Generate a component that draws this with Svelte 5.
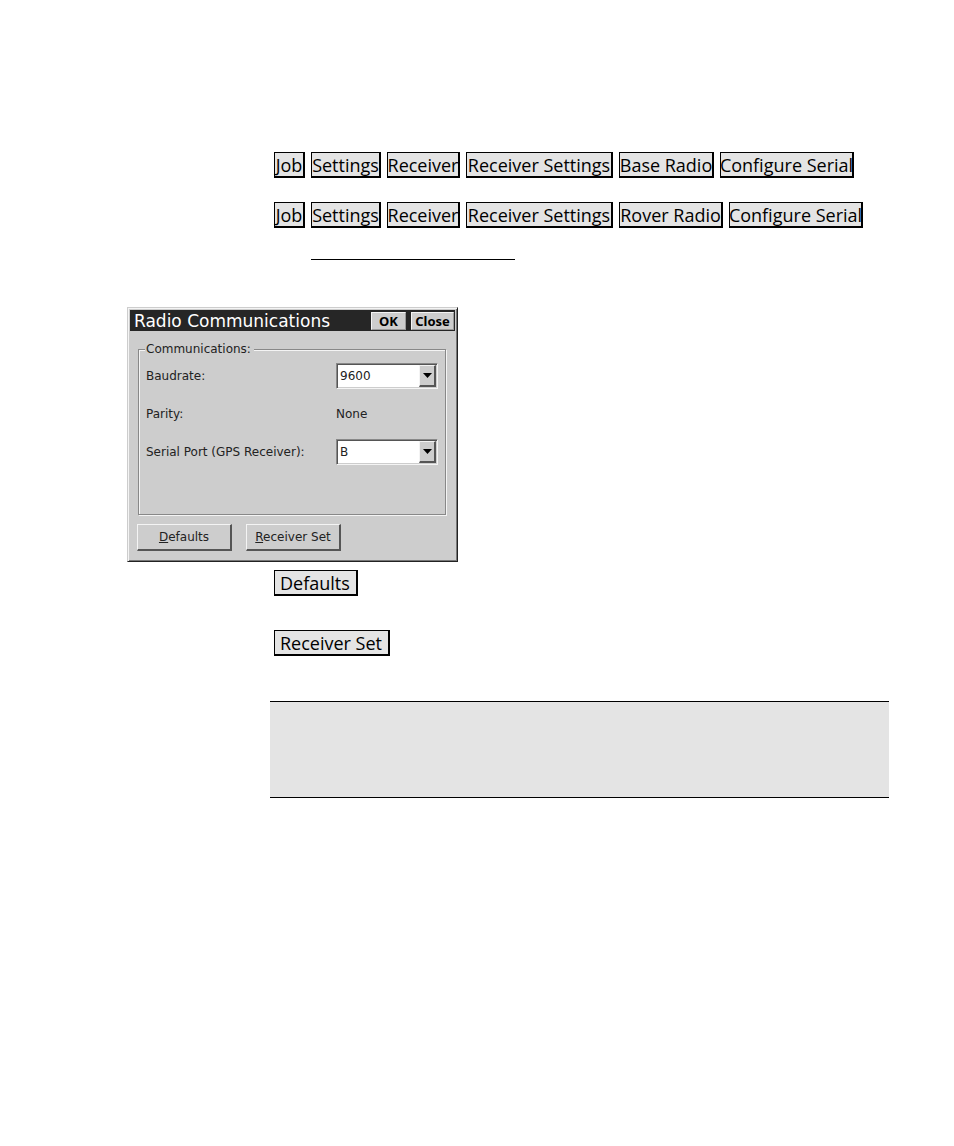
<script>
    const paths = [
        { id: 'base', steps: ['Job', 'Settings', 'Receiver', 'Receiver Settings', 'Base Radio', 'Configure Serial'] },
        { id: 'rover', steps: ['Job', 'Settings', 'Receiver', 'Receiver Settings', 'Rover Radio', 'Configure Serial'] }
    ];

    let baudrate = $state('9600');
    let port = $state('B');

    function reset() {
        baudrate = '9600';
        port = 'B';
    }
</script>

<main class="page">
    {#each paths as path (path.id)}
        <nav class="path {path.id}" aria-label={path.id}>
            {#each path.steps as step}
                <button class="key">{step}</button>
            {/each}
        </nav>
    {/each}

    <hr class="rule" />

    <form class="dialog" onsubmit={(e) => e.preventDefault()}>
        <header class="titlebar">
            <h1>Radio Communications</h1>
            <button class="title-btn ok">OK</button>
            <button class="title-btn close" type="button">Close</button>
        </header>

        <fieldset>
            <legend>Communications:</legend>
            <div class="row">
                <label for="baud">Baudrate:</label>
                <div class="combo">
                    <select id="baud" bind:value={baudrate}>
                        <option>4800</option>
                        <option>9600</option>
                        <option>19200</option>
                    </select>
                    <span class="arrow"><svg width="9" height="5" viewBox="0 0 9 5"><path d="M0 0h9L4.500 5z" /></svg></span>
                </div>
            </div>
            <div class="row">
                <span>Parity:</span>
                <span>None</span>
            </div>
            <div class="row">
                <label for="port">Serial Port (GPS Receiver):</label>
                <div class="combo">
                    <select id="port" bind:value={port}>
                        <option>A</option>
                        <option>B</option>
                        <option>C</option>
                        <option>D</option>
                    </select>
                    <span class="arrow"><svg width="9" height="5" viewBox="0 0 9 5"><path d="M0 0h9L4.500 5z" /></svg></span>
                </div>
            </div>
        </fieldset>

        <footer class="actions">
            <button type="button" onclick={reset}><u>D</u>efaults</button>
            <button type="button"><u>R</u>eceiver Set</button>
        </footer>
    </form>

    <div class="terms">
        <button class="key wide">Defaults</button>
        <button class="key wide">Receiver Set</button>
    </div>

    <aside class="note"></aside>
</main>

<style>
    :global(body) {
        margin: 0;
        background: #fff;
        color: #000;
        font-family: 'Open Sans', 'Noto Sans', sans-serif;
    }

    .page { padding: 152px 65px 40px 127px; }

    button { font-family: inherit; color: #000; border-radius: 0; cursor: pointer; white-space: nowrap; }

    .path {
        display: grid;
        gap: 6px;
        margin: 0 0 24px 147px;
    }
    .base { grid-template-columns: 31px 70px 73px 147px 95px 134px; }
    .rover { grid-template-columns: 31px 70px 73px 147px 104px 134px; }

    .key {
        display: flex;
        align-items: center;
        justify-content: center;
        box-sizing: border-box;
        height: 26px;
        padding: 0;
        border: solid #000;
        border-width: 1px 2px 2px 1px;
        background: #e4e4e4;
        font-size: 18px;
        line-height: 20px;
    }

    .rule {
        width: 204px;
        margin: 31px 0 47px 184px;
        border: 0;
        border-top: 1px solid #000;
    }

    .dialog {
        box-sizing: border-box;
        width: 331px;
        padding: 2px;
        border: 1px solid;
        border-color: #cdcdcd #222 #222 #cdcdcd;
        box-shadow: inset 1px 1px #f4f4f4, inset -1px -1px #777;
        background: #cdcdcd;
        color: #222;
        font-family: 'DejaVu Sans', sans-serif;
        font-size: 12px;
        line-height: 16px;
    }

    .titlebar {
        display: flex;
        align-items: center;
        gap: 5px;
        height: 21px;
        padding: 0 1px 0 4px;
        background: #262626;
    }

    h1 {
        flex: 1;
        margin: 0;
        color: #fff;
        font-size: 17px;
        font-weight: 400;
        line-height: 20px;
    }

    .title-btn {
        box-sizing: border-box;
        height: 18px;
        padding: 0;
        border: 1px solid;
        border-color: #f4f4f4 #999 #999 #f4f4f4;
        background: #cdcdcd;
        font-family: 'Noto Sans', sans-serif;
        font-size: 13px;
        font-weight: 700;
        line-height: 14px;
    }
    .ok { width: 35px; }
    .close { width: 43px; }

    fieldset {
        position: relative;
        height: 166px;
        box-sizing: border-box;
        margin: 18px 9px 9px 8px;
        padding: 12px 7px 0;
        border: 1px solid #888;
        box-shadow: 1px 1px #f4f4f4, inset 1px 1px #f4f4f4;
    }

    legend {
        position: absolute;
        top: -9px;
        left: 6px;
        padding: 0 3px 0 1px;
        background: #cdcdcd;
    }

    .row {
        display: grid;
        grid-template-columns: 190px 102px;
        align-items: center;
        height: 28px;
        margin-bottom: 10px;
    }

    .combo {
        display: flex;
        box-sizing: border-box;
        height: 26px;
        border: 1px solid;
        border-color: #888 #f4f4f4 #f4f4f4 #888;
        background: #fff;
        box-shadow: inset 1px 1px #555, inset -1px -1px #cdcdcd;
    }

    select {
        flex: 1;
        appearance: none;
        min-width: 0;
        padding: 0 3px;
        border: 0;
        background: transparent;
        color: #222;
        font-family: inherit;
        font-size: 12px;
    }

    .arrow {
        display: flex;
        align-items: center;
        justify-content: center;
        box-sizing: border-box;
        width: 17px;
        margin: 1px;
        border: solid;
        border-width: 1px 2px 2px 1px;
        border-color: #f4f4f4 #555 #555 #f4f4f4;
        background: #cdcdcd;
        pointer-events: none;
    }

    .actions { display: flex; gap: 14px; padding: 0 7px 8px; }
    .actions button {
        width: 95px;
        height: 27px;
        padding: 0;
        border: solid;
        border-width: 1px 2px 2px 1px;
        border-color: #f4f4f4 #555 #555 #f4f4f4;
        background: #cdcdcd;
        color: #222;
        font-size: 12px;
    }

    .terms {
        display: flex;
        flex-direction: column;
        align-items: flex-start;
        gap: 34px;
        margin: 8px 0 0 147px;
    }
    .wide { padding: 0 6px 0 5px; }

    .note {
        height: 95px;
        margin: 45px 0 0 143px;
        border: solid #000;
        border-width: 1px 0;
        background: #e4e4e4;
    }
</style>
